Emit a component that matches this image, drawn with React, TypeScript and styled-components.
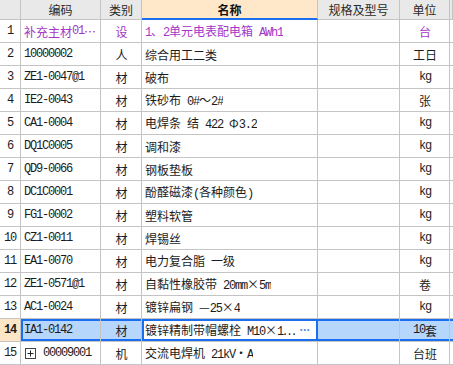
import React from 'react';
import styled, { createGlobalStyle, css } from 'styled-components';

const GlobalStyle = createGlobalStyle`
  html, body {
    margin: 0;
    padding: 0;
    background: #ffffff;
  }

  body {
    font-family: "Noto Sans CJK SC", "DejaVu Sans", sans-serif;
    font-size: 12px;
    color: #1c1c1c;
  }
`;

const COLUMNS = '21px 80px 41px 176px 82px 50px 1fr';
const GRID = '#c4c4c4';
const BLUE = '#1a6ff0';
const PURPLE = '#a336c6';

const Table = styled.div`
  display: flex;
  flex-direction: column;
  width: 453px;
  height: 365px;
  overflow: hidden;
`;

const HeaderRow = styled.div`
  display: grid;
  grid-template-columns: ${COLUMNS};
  height: 21px;
  background: #e9e9e9;
`;

const HeadCell = styled.div<{ $active?: boolean }>`
  display: flex;
  align-items: center;
  justify-content: center;
  box-sizing: border-box;
  border-right: 1px solid ${GRID};
  border-bottom: 1px solid ${GRID};
  font-size: 12px;
  color: #2a2a2a;

  ${(p) =>
    p.$active &&
    css`
      background: #ffe8c9;
      font-weight: bold;
      color: #111;
      border-bottom: 2px solid ${BLUE};
    `}
`;

const Row = styled.div`
  display: grid;
  grid-template-columns: ${COLUMNS};
  height: 23px;
  flex-shrink: 0;
`;

const Cell = styled.div<{
  $align?: 'left' | 'center';
  $purple?: boolean;
  $selected?: boolean;
  $first?: boolean;
  $active?: boolean;
}>`
  display: flex;
  align-items: center;
  justify-content: ${(p) => (p.$align === 'center' ? 'center' : 'flex-start')};
  box-sizing: border-box;
  padding: 0 2px 0 3px;
  white-space: nowrap;
  overflow: hidden;
  border-right: 1px solid ${GRID};
  border-bottom: 1px solid ${GRID};
  color: ${(p) => (p.$purple ? PURPLE : '#1c1c1c')};

  ${(p) =>
    p.$selected &&
    css`
      background: #b7d6fb;
      box-shadow: inset 0 2px 0 ${BLUE}, inset 0 -2px 0 ${BLUE};
    `}

  ${(p) =>
    p.$selected &&
    p.$first &&
    css`
      box-shadow: inset 0 2px 0 ${BLUE}, inset 0 -2px 0 ${BLUE},
        inset 2px 0 0 ${BLUE};
    `}

  ${(p) =>
    p.$active &&
    css`
      background: #ffffff;
      justify-content: space-between;
      border-right: none;
      box-shadow: inset 0 2px 0 ${BLUE}, inset 0 -2px 0 ${BLUE},
        inset 2px 0 0 ${BLUE}, inset -2px 0 0 ${BLUE};
    `}
`;

const NumCell = styled.div<{ $current?: boolean }>`
  display: flex;
  align-items: center;
  justify-content: center;
  box-sizing: border-box;
  border-right: 1px solid ${GRID};
  border-bottom: 1px solid ${GRID};
  background: ${(p) => (p.$current ? '#fde6c6' : '#ffffff')};
  font-weight: ${(p) => (p.$current ? 'bold' : 'normal')};
`;

const Latin = styled.span`
  font-family: "Liberation Mono", "DejaVu Sans Mono", monospace;
  font-size: 12px;
  letter-spacing: -1.2px;
  white-space: pre;
`;

const NameText = styled.span`
  min-width: 0;
  overflow: hidden;
`;

const Dots = styled.span`
  flex-shrink: 0;
  font-family: "Liberation Sans", Arial, sans-serif;
  color: #4b93dc;
  font-weight: bold;
  font-size: 12px;
  letter-spacing: -0.5px;
  padding-right: 6px;
`;

const Expand = styled.svg`
  flex-shrink: 0;
  margin: 0 7px 0 1px;
`;

const mixed = (s: string) =>
  s
    .split(/([\x20-\x7e]+)/)
    .filter(Boolean)
    .map((part, i) =>
      /^[\x20-\x7e]+$/.test(part) ? (
        <Latin key={i}>{part}</Latin>
      ) : (
        <span key={i}>{part}</span>
      )
    );

type Item = {
  code: string;
  kind: string;
  name: string;
  unit: string;
  purple?: boolean;
  tree?: boolean;
};

const items: Item[] = [
  { code: '补充主材01…', kind: '设', name: '1、2单元电表配电箱 AWh1', unit: '台', purple: true },
  { code: '10000002', kind: '人', name: '综合用工二类', unit: '工日' },
  { code: 'ZE1-0047@1', kind: '材', name: '破布', unit: 'kg' },
  { code: 'IE2-0043', kind: '材', name: '铁砂布 0#～2#', unit: '张' },
  { code: 'CA1-0004', kind: '材', name: '电焊条 结 422 Φ3.2', unit: 'kg' },
  { code: 'DQ1C0005', kind: '材', name: '调和漆', unit: 'kg' },
  { code: 'QD9-0066', kind: '材', name: '钢板垫板', unit: 'kg' },
  { code: 'DC1C0001', kind: '材', name: '酚醛磁漆(各种颜色)', unit: 'kg' },
  { code: 'FG1-0002', kind: '材', name: '塑料软管', unit: 'kg' },
  { code: 'CZ1-0011', kind: '材', name: '焊锡丝', unit: 'kg' },
  { code: 'EA1-0070', kind: '材', name: '电力复合脂 一级', unit: 'kg' },
  { code: 'ZE1-0571@1', kind: '材', name: '自黏性橡胶带 20mm×5m', unit: '卷' },
  { code: 'AC1-0024', kind: '材', name: '镀锌扁钢 —25×4', unit: 'kg' },
  { code: 'IA1-0142', kind: '材', name: '镀锌精制带帽螺栓 M10×1…', unit: '10套' },
  { code: '00009001', kind: '机', name: '交流电焊机 21kV·A', unit: '台班', tree: true },
];

const CURRENT = 13;

export default function App() {
  return (
    <>
      <GlobalStyle />
      <Table>
        <HeaderRow>
          <HeadCell />
          <HeadCell>编码</HeadCell>
          <HeadCell>类别</HeadCell>
          <HeadCell $active>名称</HeadCell>
          <HeadCell>规格及型号</HeadCell>
          <HeadCell>单位</HeadCell>
          <HeadCell />
        </HeaderRow>

        {items.map((item, i) => {
          const sel = i === CURRENT;
          return (
            <Row key={i}>
              <NumCell $current={sel}>
                <Latin>{i + 1}</Latin>
              </NumCell>
              <Cell $purple={item.purple} $selected={sel} $first>
                {item.tree && (
                  <Expand width="11" height="11" viewBox="0 0 11 11">
                    <rect x="0.5" y="0.5" width="10" height="10" fill="#fff" stroke="#444" />
                    <path d="M2.5 5.5h6M5.5 2.5v6" stroke="#222" strokeWidth="1" />
                  </Expand>
                )}
                {mixed(item.code)}
              </Cell>
              <Cell $align="center" $purple={item.purple} $selected={sel}>
                {item.kind}
              </Cell>
              <Cell $purple={item.purple} $active={sel}>
                <NameText>{mixed(item.name)}</NameText>
                {sel && <Dots>···</Dots>}
              </Cell>
              <Cell $selected={sel} />
              <Cell $align="center" $purple={item.purple} $selected={sel}>
                {mixed(item.unit)}
              </Cell>
              <Cell $selected={sel} />
            </Row>
          );
        })}
      </Table>
    </>
  );
}
